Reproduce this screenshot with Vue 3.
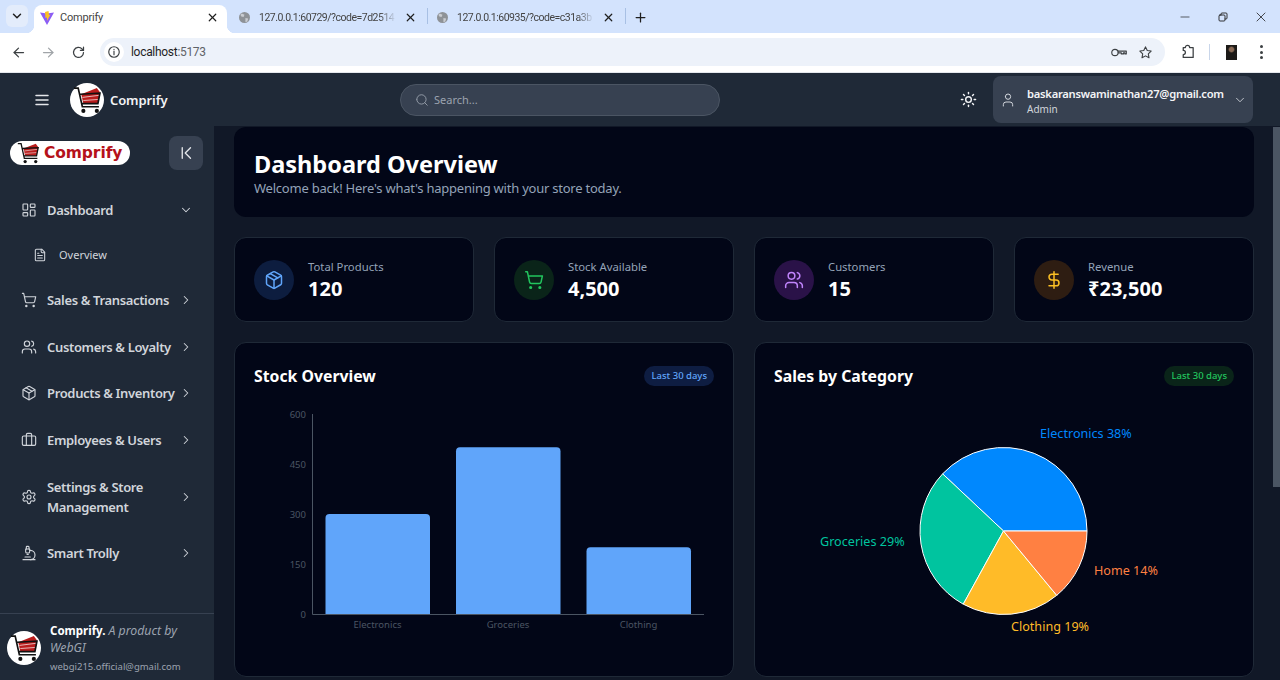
<script setup>
import { h } from 'vue'

const circle = (cx, cy, r) => `M${cx - r} ${cy}a${r} ${r} 0 1 0 ${r * 2} 0a${r} ${r} 0 1 0 ${-r * 2} 0`
const rect = (x, y, w, ht, r) =>
  `M${x + r} ${y}h${w - 2 * r}a${r} ${r} 0 0 1 ${r} ${r}v${ht - 2 * r}a${r} ${r} 0 0 1 ${-r} ${r}h${-(w - 2 * r)}a${r} ${r} 0 0 1 ${-r} ${-r}v${-(ht - 2 * r)}a${r} ${r} 0 0 1 ${r} ${-r}z`

const icons = {
  menu: ['M4 6h16', 'M4 12h16', 'M4 18h16'],
  search: [circle(11, 11, 8), 'm21 21-4.3-4.3'],
  sun: [circle(12, 12, 4), 'M12 2v2', 'M12 20v2', 'm4.93 4.93 1.41 1.41', 'm17.66 17.66 1.41 1.41', 'M2 12h2', 'M20 12h2', 'm6.34 17.66-1.41 1.41', 'm19.07 4.93-1.41 1.41'],
  user: ['M19 21v-2a4 4 0 0 0-4-4H9a4 4 0 0 0-4 4v2', circle(12, 7, 4)],
  down: ['m6 9 6 6 6-6'],
  right: ['m9 18 6-6-6-6'],
  collapse: ['M7 5v14', 'M18 5l-7 7 7 7'],
  dashboard: [rect(3, 3, 7, 9, 1), rect(14, 3, 7, 5, 1), rect(14, 12, 7, 9, 1), rect(3, 16, 7, 5, 1)],
  file: ['M15 2H6a2 2 0 0 0-2 2v16a2 2 0 0 0 2 2h12a2 2 0 0 0 2-2V7Z', 'M14 2v4a2 2 0 0 0 2 2h4', 'M10 9H8', 'M16 13H8', 'M16 17H8'],
  cart: [circle(8, 21, 1), circle(19, 21, 1), 'M2.05 2.05h2l2.66 12.42a2 2 0 0 0 2 1.58h9.78a2 2 0 0 0 1.95-1.57l1.65-7.43H5.12'],
  users: ['M16 21v-2a4 4 0 0 0-4-4H6a4 4 0 0 0-4 4v2', circle(9, 7, 4), 'M22 21v-2a4 4 0 0 0-3-3.87', 'M16 3.13a4 4 0 0 1 0 7.75'],
  box: ['M21 16V8a2 2 0 0 0-1-1.73l-7-4a2 2 0 0 0-2 0l-7 4A2 2 0 0 0 3 8v8a2 2 0 0 0 1 1.73l7 4a2 2 0 0 0 2 0l7-4A2 2 0 0 0 21 16z', 'm7.5 4.27 9 5.15', 'M3.27 6.96 12 12.01l8.73-5.05', 'M12 22.08V12'],
  briefcase: ['M16 20V4a2 2 0 0 0-2-2h-4a2 2 0 0 0-2 2v16', rect(2, 6, 20, 14, 2)],
  settings: ['M12.22 2h-.44a2 2 0 0 0-2 2v.18a2 2 0 0 1-1 1.73l-.43.25a2 2 0 0 1-2 0l-.15-.08a2 2 0 0 0-2.73.73l-.22.38a2 2 0 0 0 .73 2.73l.15.1a2 2 0 0 1 1 1.72v.51a2 2 0 0 1-1 1.74l-.15.09a2 2 0 0 0-.73 2.73l.22.38a2 2 0 0 0 2.73.73l.15-.08a2 2 0 0 1 2 0l.43.25a2 2 0 0 1 1 1.73V20a2 2 0 0 0 2 2h.44a2 2 0 0 0 2-2v-.18a2 2 0 0 1 1-1.73l.43-.25a2 2 0 0 1 2 0l.15.08a2 2 0 0 0 2.73-.73l.22-.39a2 2 0 0 0-.73-2.73l-.15-.08a2 2 0 0 1-1-1.74v-.5a2 2 0 0 1 1-1.74l.15-.09a2 2 0 0 0 .73-2.73l-.22-.38a2 2 0 0 0-2.73-.73l-.15.08a2 2 0 0 1-2 0l-.43-.25a2 2 0 0 1-1-1.73V4a2 2 0 0 0-2-2z', circle(12, 12, 3)],
  microscope: ['M6 18h8', 'M3 22h18', 'M14 22a7 7 0 1 0 0-14h-1', 'M9 14h2', 'M9 12a2 2 0 0 1-2-2V6h6v4a2 2 0 0 1-2 2Z', 'M12 6V3a1 1 0 0 0-1-1H9a1 1 0 0 0-1 1v3'],
  dollar: ['M12 2v20', 'M17 5H9.5a3.5 3.5 0 0 0 0 7h5a3.5 3.5 0 0 1 0 7H6'],
  close: ['M6 6l12 12', 'M18 6 6 18'],
  plus: ['M5 12h14', 'M12 5v14'],
  back: ['M20 12H5', 'M12 19l-7-7 7-7'],
  forward: ['M4 12h15', 'M12 5l7 7-7 7'],
  reload: ['M20 12a8 8 0 1 1-2.3-5.7L20 8.5', 'M20 3.5v5h-5'],
  info: [circle(12, 12, 9), 'M12 11v5.5', 'M12 7.5v.5'],
  key: [circle(7, 12, 4.5), 'M11.5 10H23v4h-2v-1.5h-2V14h-3v-1.5h-4.5'],
  star: ['M12 3l2.8 5.8 6.2.9-4.5 4.4 1.1 6.3-5.6-3-5.6 3 1.1-6.3L3 9.700l6.200-.9z'],
  puzzle: ['M9 5a3 3 0 0 1 6 0h5v14H6v-4a3 3 0 0 0 0-6V5z'],
  minimize: ['M5 12h14'],
  restore: [rect(4, 8, 12, 12, 2), 'M8 8V6a2 2 0 0 1 2-2h8a2 2 0 0 1 2 2v8a2 2 0 0 1-2 2h-2'],
}

// 线条图标
const Icon = (props) =>
  h('svg', {
    width: props.size || 16,
    height: props.size || 16,
    viewBox: '0 0 24 24',
    fill: 'none',
    stroke: 'currentColor',
    'stroke-width': props.sw || 2,
    'stroke-linecap': 'round',
    'stroke-linejoin': 'round',
    class: 'icon',
  }, icons[props.name].map((d) => h('path', { d })))
Icon.props = ['name', 'size', 'sw']

// 购物车 logo
const Cart = (props) =>
  h('svg', { width: props.size, height: props.size, viewBox: '3 4 27 27', class: 'icon' }, [
    h('path', { d: 'M11 12 26 6l3 4-2 11H13z', fill: '#b91c1c' }),
    h('path', { d: 'M12 15l16-2M13 18l14-1', stroke: '#f3d5d5', 'stroke-width': 0.8, fill: 'none' }),
    h('path', { d: 'M4 6h4l4 18h16M10 12l19-1-2 10H12', stroke: '#111', 'stroke-width': 1.6, fill: 'none' }),
    h('circle', { cx: 13, cy: 28, r: 2, fill: '#111' }),
    h('circle', { cx: 26, cy: 28, r: 2, fill: '#111' }),
  ])
Cart.props = ['size']

const navItems = [
  { label: 'Sales & Transactions', icon: 'cart' },
  { label: 'Customers & Loyalty', icon: 'users' },
  { label: 'Products & Inventory', icon: 'box' },
  { label: 'Employees & Users', icon: 'briefcase' },
  { label: 'Settings & Store Management', icon: 'settings' },
  { label: 'Smart Trolly', icon: 'microscope' },
]

const tabs = ['127.0.0.1:60729/?code=7d2514', '127.0.0.1:60935/?code=c31a3b']

const stats = [
  { label: 'Total Products', value: '120', icon: 'box', color: '#60a5fa', bg: '#0d1d3f' },
  { label: 'Stock Available', value: '4,500', icon: 'cart', color: '#22c55e', bg: '#0a2419' },
  { label: 'Customers', value: '15', icon: 'users', color: '#c084fc', bg: '#2a1248' },
  { label: 'Revenue', value: '₹23,500', icon: 'dollar', color: '#fbbf24', bg: '#2e1d12' },
]

// 柱状图,坐标相对于 svg 左上角
const barBase = 210
const barScale = 1 / 3
const ticks = [0, 150, 300, 450, 600]
const bars = [
  { name: 'Electronics', value: 300, x: 71.500 },
  { name: 'Groceries', value: 500, x: 202 },
  { name: 'Clothing', value: 200, x: 332.500 },
]

const pieCx = 229.500
const pieCy = 127
const pieR = 83.500
const slices = [
  { pct: 38, color: '#0088fe' },
  { pct: 29, color: '#00c49f' },
  { pct: 19, color: '#ffbb28' },
  { pct: 14, color: '#ff8042' },
]
const pieLabels = [
  { text: 'Electronics 38%', x: 266, y: 34, color: '#0088fe' },
  { text: 'Groceries 29%', x: 46, y: 142, color: '#00c49f' },
  { text: 'Home 14%', x: 320, y: 171, color: '#ff8042' },
  { text: 'Clothing 19%', x: 237, y: 227, color: '#ffbb28' },
]
const slicePath = (i) => {
  const before = slices.slice(0, i).reduce((sum, s) => sum + s.pct, 0)
  const a0 = (before / 100) * Math.PI * 2
  const a1 = ((before + slices[i].pct) / 100) * Math.PI * 2
  const px = (a) => (pieCx + pieR * Math.cos(a)).toFixed(2)
  const py = (a) => (pieCy - pieR * Math.sin(a)).toFixed(2)
  const large = slices[i].pct > 50 ? 1 : 0
  return `M${pieCx} ${pieCy}L${px(a0)} ${py(a0)}A${pieR} ${pieR} 0 ${large} 0 ${px(a1)} ${py(a1)}Z`
}
</script>

<template>
  <div class="window">
    <div class="tabstrip">
      <button class="tab-menu"><Icon name="down" :size="14" :sw="2.5" /></button>
      <div class="tab active">
        <svg class="icon" width="16" height="16" viewBox="0 0 16 16">
          <path d="M1 2.500 8 3.500l7-1-7 12.500z" fill="#8b5cf6" />
          <path d="M9.500 1 6 2l.5 6L8 7.500v3.500l3.500-6.500-1.500.5z" fill="#fbbf24" />
        </svg>
        <span class="tab-title">Comprify</span>
        <Icon name="close" :size="13" :sw="2.200" class="tab-close" />
      </div>
      <template v-for="t in tabs" :key="t">
        <div class="tab">
          <svg class="icon globe" width="11" height="11" viewBox="0 0 12 12">
            <circle cx="6" cy="6" r="6" fill="#8e9297" />
            <path d="M3 1.500 6 3 5 5.500 2.500 5 1.500 3zM7 6.500l3 .5-1 3.500-2 .5z" fill="#c9ccd1" />
          </svg>
          <span class="tab-title fade">{{ t }}</span>
          <Icon name="close" :size="13" :sw="2.200" class="tab-close" />
        </div>
        <i class="tab-sep"></i>
      </template>
      <Icon name="plus" :size="15" :sw="2" class="tab-plus" />
      <div class="win-controls">
        <Icon name="minimize" :size="14" :sw="1.200" />
        <Icon name="restore" :size="12" :sw="1.800" />
        <Icon name="close" :size="16" :sw="1.200" />
      </div>
    </div>

    <div class="toolbar">
      <Icon name="back" :size="15" class="tool" />
      <Icon name="forward" :size="15" class="tool muted" />
      <Icon name="reload" :size="15" class="tool" />
      <div class="address">
        <span class="site-info"><Icon name="info" :size="14" /></span>
        <span class="url">localhost<span class="url-port">:5173</span></span>
        <Icon name="key" :size="17" :sw="1.600" />
        <Icon name="star" :size="15" :sw="1.800" class="star" />
      </div>
      <Icon name="puzzle" :size="17" :sw="1.800" class="puzzle" />
      <i class="tool-sep"></i>
      <span class="profile"></span>
      <span class="dots"><i></i><i></i><i></i></span>
    </div>

    <header class="topbar">
      <div class="top-left">
        <Icon name="menu" :size="18" class="hamburger" />
        <span class="round-logo"><Cart :size="28" /></span>
        <span class="brand">Comprify</span>
      </div>
      <div class="search">
        <Icon name="search" :size="14" :sw="1.500" />
        <span>Search...</span>
      </div>
      <div class="spacer"></div>
      <Icon name="sun" :size="17" class="sun" />
      <div class="account">
        <Icon name="user" :size="16" :sw="1.500" />
        <div class="account-text">
          <div class="email">baskaranswaminathan27@gmail.com</div>
          <div class="role">Admin</div>
        </div>
        <Icon name="down" :size="14" :sw="1.500" />
      </div>
    </header>

    <div class="body">
      <aside class="sidebar">
        <div class="side-head">
          <div class="pill-logo">
            <Cart :size="22" />
            <span class="pill-text">Comprify</span>
          </div>
          <button class="collapse"><Icon name="collapse" :size="18" :sw="1.800" /></button>
        </div>
        <nav class="nav">
          <div class="nav-item">
            <Icon name="dashboard" :sw="1.700" class="nav-icon" />
            <span class="nav-label">Dashboard</span>
            <Icon name="down" :size="14" :sw="1.800" />
          </div>
          <div class="sub-item">
            <Icon name="file" :size="14" :sw="1.800" />
            <span>Overview</span>
          </div>
          <div v-for="item in navItems" :key="item.label" class="nav-item">
            <Icon :name="item.icon" :sw="1.700" class="nav-icon" />
            <span class="nav-label">{{ item.label }}</span>
            <Icon name="right" :size="14" :sw="1.800" />
          </div>
        </nav>
        <div class="side-foot">
          <span class="round-logo"><Cart :size="28" /></span>
          <div class="foot-text">
            <div class="foot-title"><b>Comprify.</b> <em>A product by WebGI</em></div>
            <div class="foot-mail">webgi215.official@gmail.com</div>
          </div>
        </div>
      </aside>

      <main class="main">
        <section class="hero">
          <h1>Dashboard Overview</h1>
          <p>Welcome back! Here's what's happening with your store today.</p>
        </section>

        <section class="stats">
          <div v-for="s in stats" :key="s.label" class="card stat">
            <span class="stat-icon" :style="{ background: s.bg, color: s.color }">
              <Icon :name="s.icon" :size="20" :sw="1.800" />
            </span>
            <div class="stat-text">
              <div class="stat-label">{{ s.label }}</div>
              <div class="stat-value">{{ s.value }}</div>
            </div>
          </div>
        </section>

        <section class="charts">
          <div class="card chart-card">
            <div class="chart-head">
              <h2>Stock Overview</h2>
              <span class="badge blue">Last 30 days</span>
            </div>
            <svg class="chart" width="460" height="240" viewBox="0 0 460 240">
              <path d="M58.500 10V210.500H450" fill="none" stroke="#4b5563" />
              <text v-for="t in ticks" :key="t" class="tick" x="52" :y="barBase - t * barScale + 3.500" text-anchor="end">{{ t }}</text>
              <g v-for="b in bars" :key="b.name">
                <path :d="`M${b.x} ${barBase}v${-(b.value * barScale - 4)}a4 4 0 0 1 4 -4h96.500a4 4 0 0 1 4 4v${b.value * barScale - 4}z`" fill="#60a5fa" />
                <text class="tick" :x="b.x + 52" y="224" text-anchor="middle">{{ b.name }}</text>
              </g>
            </svg>
          </div>
          <div class="card chart-card">
            <div class="chart-head">
              <h2>Sales by Category</h2>
              <span class="badge green">Last 30 days</span>
            </div>
            <svg class="chart" width="460" height="240" viewBox="0 0 460 240">
              <path v-for="(s, i) in slices" :key="s.color" :d="slicePath(i)" :fill="s.color" stroke="#fff" />
              <text v-for="l in pieLabels" :key="l.text" class="pie-label" :x="l.x" :y="l.y" :fill="l.color">{{ l.text }}</text>
            </svg>
          </div>
        </section>
      </main>

      <div class="scrollbar"><div class="thumb"></div></div>
    </div>
  </div>
</template>

<style>
html, body {
  margin: 0;
  overflow: hidden;
}
</style>

<style scoped>
.window {
  width: 1280px;
  height: 680px;
  overflow: hidden;
  display: flex;
  flex-direction: column;
  font-family: "Noto Sans", "Open Sans", sans-serif;
  background: #111827;
}
.icon {
  display: block;
  flex: none;
}

/* 浏览器标签栏 */
.tabstrip {
  height: 33px;
  flex: none;
  display: flex;
  align-items: flex-end;
  padding-left: 6px;
  background: #d3e3fd;
  color: #1f1f1f;
  font-family: Roboto, sans-serif;
  font-size: 10.500px;
  letter-spacing: -0.5px;
}
.tab-menu {
  width: 22px;
  height: 22px;
  margin: 0 6px 6px 0;
  padding: 0;
  border: 0;
  border-radius: 6px;
  background: #e3ecfb;
  color: #1f1f1f;
  display: flex;
  align-items: center;
  justify-content: center;
}
.tab {
  width: 199px;
  height: 28px;
  box-sizing: border-box;
  display: flex;
  align-items: center;
  padding: 0 9px 3px 5px;
  flex: none;
}
.tab.active {
  position: relative;
  width: 193px;
  padding-right: 8px;
  background: #fff;
  border-radius: 8px 8px 0 0;
  font-size: 11px;
  letter-spacing: -0.2px;
}
.tab.active::before,
.tab.active::after {
  content: "";
  position: absolute;
  bottom: 0;
  width: 8px;
  height: 8px;
}
.tab.active::before {
  left: -8px;
  background: radial-gradient(circle at 0 0, transparent 8px, #fff 8.500px);
}
.tab.active::after {
  right: -8px;
  background: radial-gradient(circle at 100% 0, transparent 8px, #fff 8.500px);
}
.tab-title {
  flex: 1;
  min-width: 0;
  margin-left: 9px;
  white-space: nowrap;
  overflow: hidden;
  color: #444;
}
.active .tab-title {
  margin-left: 5px;
}
.fade {
  -webkit-mask-image: linear-gradient(90deg, #000 88%, transparent);
  mask-image: linear-gradient(90deg, #000 88%, transparent);
}
.tab-close {
  margin-left: 8px;
}
.globe {
  margin-left: 7px;
}
.tab-sep {
  width: 1px;
  height: 16px;
  margin: 0 -3px 9px 1px;
  background: #a8c0e4;
  flex: none;
}
.tab-plus {
  margin: 0 0 8px 10px;
}
.win-controls {
  margin-left: auto;
  width: 102px;
  height: 33px;
  display: flex;
  align-items: center;
  justify-content: space-between;
  padding-right: 11px;
  box-sizing: border-box;
}

/* 地址栏 */
.toolbar {
  height: 40px;
  flex: none;
  box-sizing: border-box;
  display: flex;
  align-items: center;
  padding: 0 0 1px 11px;
  background: #fff;
  border-bottom: 1px solid #e4e7ec;
  color: #3c4043;
}
.tool {
  margin-right: 15px;
}
.tool.muted {
  color: #a0a4a8;
}
.address {
  width: 1065px;
  height: 28px;
  margin-left: -1px;
  display: flex;
  align-items: center;
  box-sizing: border-box;
  padding: 0 12.500px 0 4px;
  border-radius: 14px;
  background: #edf2fa;
}
.site-info {
  width: 20px;
  height: 20px;
  border-radius: 50%;
  background: #fff;
  display: flex;
  align-items: center;
  justify-content: center;
}
.url {
  flex: 1;
  margin-left: 7px;
  font-family: Roboto, sans-serif;
  font-size: 12px;
  letter-spacing: -0.3px;
  color: #1f1f1f;
}
.url-port {
  color: #5f6368;
}
.star {
  margin-left: 11px;
}
.puzzle {
  margin-left: 13.500px;
}
.tool-sep {
  width: 1px;
  height: 16px;
  margin-left: 13px;
  background: #c9d6ea;
}
.profile {
  width: 11px;
  height: 15px;
  margin-left: 16px;
  background: radial-gradient(circle at 50% 30%, #8a6a55 0 2px, #1c1a17 3.500px);
}
.dots {
  margin-left: 23px;
  display: flex;
  flex-direction: column;
  gap: 2.500px;
}
.dots i {
  width: 3px;
  height: 3px;
  border-radius: 50%;
  background: #3c4043;
}

/* 顶部栏 */
.topbar {
  height: 53px;
  flex: none;
  display: flex;
  align-items: center;
  background: #1f2937;
  color: #e5e7eb;
}
.top-left {
  width: 400px;
  flex: none;
  display: flex;
  align-items: center;
}
.hamburger {
  margin-left: 33px;
}
.round-logo {
  width: 34px;
  height: 34px;
  border-radius: 50%;
  background: #fff;
  display: flex;
  align-items: center;
  justify-content: center;
  flex: none;
}
.top-left .round-logo {
  margin-left: 19px;
}
.brand {
  margin-left: 6px;
  font-size: 13px;
  font-weight: 600;
  letter-spacing: -0.1px;
  color: #f3f4f6;
}
.search {
  width: 320px;
  height: 32px;
  box-sizing: border-box;
  display: flex;
  align-items: center;
  gap: 5px;
  padding-left: 14px;
  border: 1px solid #4b5563;
  border-radius: 16px;
  background: #374151;
  color: #9ca3af;
  font-size: 11px;
}
.spacer {
  flex: 1;
}
.sun {
  margin-right: 16px;
  color: #f3f4f6;
}
.account {
  width: 260px;
  height: 47px;
  margin-right: 27px;
  box-sizing: border-box;
  display: flex;
  align-items: center;
  padding: 0 6px 0 7px;
  border-radius: 8px;
  background: #374151;
  color: #d1d5db;
}
.account-text {
  flex: 1;
  margin-left: 11px;
  padding-top: 3px;
}
.email {
  font-size: 11.200px;
  font-weight: 600;
  letter-spacing: -0.25px;
  line-height: 17px;
  color: #f3f4f6;
}
.role {
  font-size: 10px;
  line-height: 15px;
}

.body {
  flex: 1;
  min-height: 0;
  display: flex;
}

/* 侧边栏 */
.sidebar {
  width: 214px;
  flex: none;
  display: flex;
  flex-direction: column;
  background: #1f2937;
  color: #d1d5db;
}
.side-head {
  display: flex;
  align-items: flex-start;
  justify-content: space-between;
  padding: 10px 11px 0 10px;
}
.pill-logo {
  width: 120px;
  height: 24px;
  margin-top: 5px;
  box-sizing: border-box;
  display: flex;
  align-items: center;
  gap: 5px;
  padding-left: 7px;
  border-radius: 12px;
  background: #fff;
}
.pill-text {
  font-family: "DejaVu Sans", sans-serif;
  font-size: 15.500px;
  font-weight: 700;
  letter-spacing: -0.1px;
  color: #b5121b;
}
.collapse {
  width: 34px;
  height: 34px;
  padding: 0;
  border: 0;
  border-radius: 8px;
  background: #374151;
  color: #e5e7eb;
  display: flex;
  align-items: center;
  justify-content: center;
}
.nav {
  flex: 1;
  margin-top: 17.700px;
  display: flex;
  flex-direction: column;
  gap: 2px;
}
.nav-item {
  display: flex;
  align-items: center;
  gap: 2px;
  padding: 12.330px 21px;
  font-size: 13px;
  font-weight: 600;
  letter-spacing: -0.35px;
  line-height: 20px;
}
.nav-icon {
  margin-right: 8px;
}
.nav-label {
  flex: 1;
}
.sub-item {
  height: 41.400px;
  box-sizing: border-box;
  padding: 0 0 1px 33px;
  display: flex;
  align-items: center;
  gap: 12px;
  font-size: 11px;
}
.side-foot {
  height: 67px;
  flex: none;
  box-sizing: border-box;
  display: flex;
  align-items: flex-start;
  gap: 9px;
  padding-left: 7px;
  border-top: 1px solid #374151;
}
.side-foot .round-logo {
  margin-top: 17px;
}
.foot-text {
  flex: 1;
  padding-top: 8px;
}
.foot-title {
  width: 140px;
  font-size: 11.500px;
  line-height: 17px;
  color: #9ca3af;
}
.foot-title b {
  color: #fff;
  font-weight: 700;
}
.foot-title em {
  font-size: 12.300px;
}
.foot-mail {
  margin-top: 3px;
  font-size: 9.500px;
  line-height: 15px;
  color: #9ca3af;
}

/* 内容区 */
.main {
  flex: 1;
  min-width: 0;
  padding: 1px 19px 0 20px;
  display: flex;
  flex-direction: column;
}
.hero {
  height: 90px;
  flex: none;
  box-sizing: border-box;
  padding: 21px 20px 0;
  border-radius: 12px;
  background: #020617;
}
h1 {
  margin: 0;
  font-size: 23.500px;
  font-weight: 700;
  line-height: 32px;
  color: #fff;
}
.hero p {
  margin: 0;
  font-size: 13px;
  letter-spacing: -0.23px;
  line-height: 16px;
  color: #94a3b8;
}
.card {
  box-sizing: border-box;
  border: 1px solid #1f2937;
  border-radius: 12px;
  background: #020617;
}
.stats {
  margin-top: 20px;
  display: grid;
  grid-template-columns: repeat(4, 1fr);
  gap: 20px;
  flex: none;
}
.stat {
  height: 85px;
  display: flex;
  align-items: center;
  gap: 14px;
  padding: 0 19px;
}
.stat-text {
  padding-top: 2px;
}
.stat-icon {
  width: 40px;
  height: 40px;
  border-radius: 50%;
  display: flex;
  align-items: center;
  justify-content: center;
  flex: none;
}
.stat-label {
  font-size: 11.300px;
  line-height: 16px;
  color: #94a3b8;
}
.stat-value {
  margin-top: 1px;
  font-size: 20px;
  font-weight: 700;
  line-height: 26px;
  color: #fff;
}
.charts {
  margin-top: 20px;
  display: grid;
  grid-template-columns: 1fr 1fr;
  gap: 20px;
}
.chart-card {
  height: 335px;
  padding: 19px;
}
.chart-head {
  height: 26px;
  margin-top: 1px;
  display: flex;
  align-items: center;
  justify-content: space-between;
}
h2 {
  margin: 0;
  font-size: 15.800px;
  font-weight: 700;
  color: #fff;
}
.badge {
  height: 20px;
  box-sizing: border-box;
  padding: 0 7px;
  border-radius: 10px;
  font-size: 9.500px;
  line-height: 20px;
  font-weight: 500;
}
.badge.blue {
  background: #0e1d42;
  color: #60a5fa;
}
.badge.green {
  background: #0a2419;
  color: #22c55e;
}
.chart {
  display: block;
  margin-top: 15px;
}
.tick {
  font-size: 9.500px;
  fill: #4b5563;
}
.pie-label {
  font-size: 12.600px;
}
.scrollbar {
  width: 7px;
  flex: none;
  padding-top: 1px;
}
.thumb {
  height: 360px;
  background: #4b5563;
}
</style>
